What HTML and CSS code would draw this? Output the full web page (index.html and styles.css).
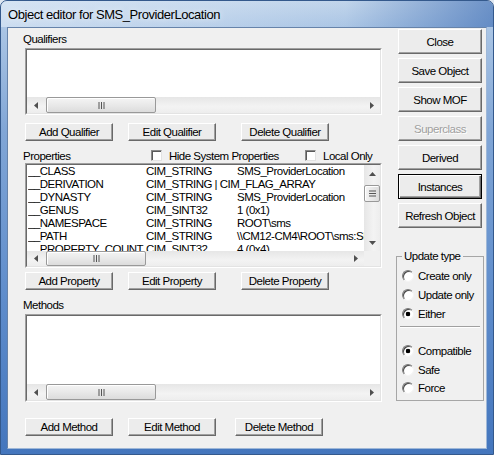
FILE: index.html
```html
<!DOCTYPE html>
<html lang="en">
<head>
    <meta charset="UTF-8">
    <title>Object editor for SMS_ProviderLocation</title>
    <link rel="stylesheet" href="styles.css">
</head>
<body>
    <div class="window">
        <div class="titlebar">
            <span class="title">Object editor for SMS_ProviderLocation</span>
        </div>
        <div class="client">
            <div class="main">
                <div class="label first">Qualifiers</div>
                <div class="listbox qualifiers">
                    <div class="listbox-inner">
                        <div class="list-body"></div>
                        <div class="hscroll">
                            <span class="sb-arrow"><svg width="4" height="7"><path d="M4 0v7L0 3.5z" fill="#505050"/></svg></span>
                            <span class="sb-thumb h-thumb wide"><svg width="7" height="7"><path d="M1 0v7M3.5 0v7M6 0v7" stroke="#555" stroke-width="1"/></svg></span>
                            <span class="sb-fill"></span>
                            <span class="sb-arrow"><svg width="4" height="7"><path d="M0 0v7L4 3.5z" fill="#505050"/></svg></span>
                        </div>
                    </div>
                </div>
                <div class="btn-row">
                    <button class="btn small">Add Qualifier</button>
                    <button class="btn small edit">Edit Qualifier</button>
                    <button class="btn small delete">Delete Qualifier</button>
                </div>

                <div class="prop-head">
                    <span class="label">Properties</span>
                    <span class="check hide-sys"><span class="box"></span>Hide System Properties</span>
                    <span class="check"><span class="box"></span>Local Only</span>
                </div>
                <div class="listbox props">
                    <div class="listbox-inner">
                        <div class="props-area">
                            <div class="rows">
                                <div class="row"><span class="c-name">__CLASS</span><span class="c-type">CIM_STRING</span><span class="c-val">SMS_ProviderLocation</span></div>
                                <div class="row"><span class="c-name">__DERIVATION</span><span class="c-type">CIM_STRING | CIM_FLAG_ARRAY</span><span class="c-val"></span></div>
                                <div class="row"><span class="c-name">__DYNASTY</span><span class="c-type">CIM_STRING</span><span class="c-val">SMS_ProviderLocation</span></div>
                                <div class="row"><span class="c-name">__GENUS</span><span class="c-type">CIM_SINT32</span><span class="c-val">1 (0x1)</span></div>
                                <div class="row"><span class="c-name">__NAMESPACE</span><span class="c-type">CIM_STRING</span><span class="c-val">ROOT\sms</span></div>
                                <div class="row"><span class="c-name">__PATH</span><span class="c-type">CIM_STRING</span><span class="c-val">\\CM12-CM4\ROOT\sms:SMS_ProviderLocation</span></div>
                                <div class="row"><span class="c-name">__PROPERTY_COUNT</span><span class="c-type">CIM_SINT32</span><span class="c-val">4 (0x4)</span></div>
                            </div>
                            <div class="vscroll">
                                <span class="sb-arrow v"><svg width="7" height="4"><path d="M0 4h7L3.5 0z" fill="#505050"/></svg></span>
                                <span class="sb-thumb v-thumb"><svg width="7" height="7"><path d="M0 1h7M0 3.5h7M0 6h7" stroke="#555" stroke-width="1"/></svg></span>
                                <span class="sb-fill"></span>
                                <span class="sb-arrow v"><svg width="7" height="4"><path d="M0 0h7L3.5 4z" fill="#505050"/></svg></span>
                            </div>
                        </div>
                        <div class="hscroll-row">
                            <div class="hscroll">
                                <span class="sb-arrow"><svg width="4" height="7"><path d="M4 0v7L0 3.5z" fill="#505050"/></svg></span>
                                <span class="sb-thumb h-thumb"><svg width="7" height="7"><path d="M1 0v7M3.5 0v7M6 0v7" stroke="#555" stroke-width="1"/></svg></span>
                                <span class="sb-fill"></span>
                                <span class="sb-arrow"><svg width="4" height="7"><path d="M0 0v7L4 3.5z" fill="#505050"/></svg></span>
                            </div>
                            <div class="sb-corner"></div>
                        </div>
                    </div>
                </div>
                <div class="btn-row row2">
                    <button class="btn small">Add Property</button>
                    <button class="btn small edit">Edit Property</button>
                    <button class="btn small delete">Delete Property</button>
                </div>

                <div class="label methods-label">Methods</div>
                <div class="listbox methods">
                    <div class="listbox-inner">
                        <div class="list-body"></div>
                        <div class="hscroll">
                            <span class="sb-arrow"><svg width="4" height="7"><path d="M4 0v7L0 3.5z" fill="#505050"/></svg></span>
                            <span class="sb-thumb h-thumb wide"><svg width="7" height="7"><path d="M1 0v7M3.5 0v7M6 0v7" stroke="#555" stroke-width="1"/></svg></span>
                            <span class="sb-fill"></span>
                            <span class="sb-arrow"><svg width="4" height="7"><path d="M0 0v7L4 3.5z" fill="#505050"/></svg></span>
                        </div>
                    </div>
                </div>
                <div class="btn-row row3">
                    <button class="btn small">Add Method</button>
                    <button class="btn small edit">Edit Method</button>
                    <button class="btn small delete-m">Delete Method</button>
                </div>
            </div>

            <div class="side">
                <button class="btn big">Close</button>
                <button class="btn big">Save Object</button>
                <button class="btn big">Show MOF</button>
                <button class="btn big disabled">Superclass</button>
                <button class="btn big">Derived</button>
                <button class="btn big default">Instances</button>
                <button class="btn big">Refresh Object</button>

                <fieldset class="group">
                    <legend>Update type</legend>
                    <div class="radios top">
                        <div class="radio"><span class="dot"></span>Create only</div>
                        <div class="radio"><span class="dot"></span>Update only</div>
                        <div class="radio"><span class="dot on"></span>Either</div>
                    </div>
                    <div class="separator"></div>
                    <div class="radios bottom">
                        <div class="radio"><span class="dot on"></span>Compatible</div>
                        <div class="radio"><span class="dot"></span>Safe</div>
                        <div class="radio"><span class="dot"></span>Force</div>
                    </div>
                </fieldset>
            </div>
        </div>
    </div>
</body>
</html>
```

FILE: styles.css
```css
body {
    margin: 0;
    background: #dfe7f1;
    font-family: "Liberation Sans", Arial, sans-serif;
    font-size: 11.5px;
    letter-spacing: -0.5px;
    color: #000;
}
.window {
    box-sizing: border-box;
    width: 494px;
    height: 455px;
    border: 1px solid #34598c;
    border-radius: 7px 7px 0 0;
    padding: 0 6px 5px;
    display: flex;
    flex-direction: column;
    background: linear-gradient(#c6d8ec 0, #a9c4e4 30px, #81a6d6 130px, #5e8ccb 300px, #4476bd 100%);
}
.titlebar {
    height: 26px;
    display: flex;
    align-items: center;
    margin: 0 -6px;
    padding: 0 6px 0 7px;
    border-radius: 6px 6px 0 0;
    background: linear-gradient(to right, rgba(225,236,248,0.6) 0%, rgba(210,226,244,0.3) 45%, rgba(150,185,225,0.1) 70%, rgba(50,100,175,0.6) 100%);
}
.title {
    font-size: 13px;
    letter-spacing: -0.45px;
    text-shadow: 0 0 6px rgba(255,255,255,0.9);
}
.client {
    flex: 1;
    display: flex;
    background: #f0f0f0;
    border: 1px solid;
    border-color: #6683aa #9fb8d8 #9fb8d8 #6683aa;
}
.main {
    width: 357px;
    margin-left: 17px;
    display: flex;
    flex-direction: column;
}
.side {
    width: 84px;
    margin-left: 16px;
    display: flex;
    flex-direction: column;
}
.label {
    height: 14px;
    line-height: 14px;
    margin-left: -2px;
}
.label.first {
    margin-top: 4px;
}

/* list boxes */
.listbox {
    box-sizing: border-box;
    margin-top: 2px;
    border: 1px solid;
    border-color: #a0a0a0 #fff #fff #a0a0a0;
}
.listbox-inner {
    box-sizing: border-box;
    height: 100%;
    display: flex;
    flex-direction: column;
    background: #fff;
    border: 1px solid;
    border-color: #696969 #e3e3e3 #e3e3e3 #696969;
}
.qualifiers {
    height: 67px;
}
.methods {
    height: 88px;
}
.props {
    height: 105px;
    margin-top: 0;
}
.list-body {
    flex: 1;
}
.props-area {
    flex: 1;
    display: flex;
    min-height: 0;
}
.rows {
    flex: 1;
    overflow: hidden;
}
.row {
    display: flex;
    height: 13px;
    line-height: 13px;
    padding-left: 1px;
    white-space: nowrap;
}
.c-name {
    flex: none;
    width: 118px;
    overflow: hidden;
}
.c-type {
    flex: none;
    width: 91px;
}
.c-val {
    flex: none;
}

/* scroll bars */
.hscroll {
    flex: none;
    height: 16px;
    display: flex;
    align-items: stretch;
    background: linear-gradient(#e6e6e6, #f3f3f3 60%, #ededed);
}
.hscroll-row {
    flex: none;
    height: 15px;
    display: flex;
}
.hscroll-row .hscroll {
    flex: 1;
    height: 15px;
}
.sb-corner {
    width: 16px;
    background: #f0f0f0;
}
.vscroll {
    flex: none;
    width: 16px;
    display: flex;
    flex-direction: column;
    background: linear-gradient(to right, #e6e6e6, #f3f3f3 60%, #ededed);
}
.sb-arrow {
    flex: none;
    width: 17px;
    display: flex;
    align-items: center;
    justify-content: center;
}
.sb-arrow.v {
    width: auto;
    height: 17px;
}
.sb-fill {
    flex: 1;
}
.sb-thumb {
    box-sizing: border-box;
    display: flex;
    align-items: center;
    justify-content: center;
    border: 1px solid #999;
    border-radius: 2px;
    box-shadow: inset 1px 1px 0 #fff;
}
.h-thumb {
    width: 100px;
    margin: 0 0 0 2px;
    background: linear-gradient(#f4f4f4, #e9e9e9 50%, #dcdcdc);
}
.h-thumb.wide {
    width: 110px;
}
.v-thumb {
    height: 17px;
    margin: 3px 0 0;
    background: linear-gradient(to right, #f4f4f4, #e9e9e9 50%, #dcdcdc);
}

/* buttons */
.btn {
    box-sizing: border-box;
    padding: 0;
    font: inherit;
    letter-spacing: inherit;
    color: #000;
    background: #ececec;
    border: 1px solid;
    border-color: #fff #696969 #696969 #fff;
    box-shadow: inset -1px -1px 0 #a0a0a0;
}
.btn.small {
    width: 88px;
    height: 18px;
}
.btn.big {
    width: 84px;
    height: 25px;
    margin-bottom: 4px;
}
.btn.big:first-child {
    margin-top: 1px;
}
.btn.disabled {
    color: #a0a0a0;
    text-shadow: 1px 1px 0 #fff;
}
.btn.default {
    border-color: #000;
    box-shadow: inset 1px 1px 0 #fff, inset -1px -1px 0 #696969, inset -2px -2px 0 #a0a0a0;
}
.btn-row {
    display: flex;
    margin-top: 8px;
}
.btn-row.row2 {
    margin-top: 4px;
}
.btn-row.row3 {
    margin-top: 16px;
}
.btn.edit {
    margin-left: 15px;
}
.btn.delete {
    margin-left: 25px;
}
.btn.delete-m {
    margin-left: 19px;
}

/* properties header */
.prop-head {
    display: flex;
    align-items: center;
    height: 15px;
    margin-top: 7px;
}
.prop-head .label {
    width: 128px;
}
.check {
    display: flex;
    align-items: center;
    gap: 7px;
}
.check.hide-sys {
    width: 154px;
}
.box {
    box-sizing: border-box;
    width: 11px;
    height: 11px;
    background: #fff;
    border: 1px solid;
    border-color: #8a8a8a #e2e2e2 #e2e2e2 #8a8a8a;
    box-shadow: inset 1px 1px 0 #5a5a5a;
}
.methods-label {
    margin-top: 8px;
}

/* update type group */
.group {
    box-sizing: border-box;
    height: 152px;
    margin: 17px -2px 0;
    padding: 0 0 0 5px;
    border: 1px solid #a6a6a6;
}
.group legend {
    padding: 0 2px;
    height: 14px;
    line-height: 14px;
}
.radios.top {
    margin-top: 3px;
}
.radios.top .radio {
    height: 19px;
}
.radios.bottom {
    margin-top: 14px;
}
.radios.bottom .radio {
    height: 18.5px;
}
.radio {
    display: flex;
    align-items: center;
    gap: 4px;
}
.dot {
    box-sizing: border-box;
    width: 12px;
    height: 12px;
    border-radius: 50%;
    background: #fff;
    border: 1px solid;
    border-color: #7a7a7a #f4f4f4 #f4f4f4 #7a7a7a;
    box-shadow: inset 1px 1px 0 #4a4a4a;
}
.dot.on {
    background: radial-gradient(circle, #000 0 2px, #fff 2.6px);
}
.separator {
    margin: 3px 3px 0 -2px;
    border-top: 1px solid #a0a0a0;
    border-bottom: 1px solid #fff;
}
```
